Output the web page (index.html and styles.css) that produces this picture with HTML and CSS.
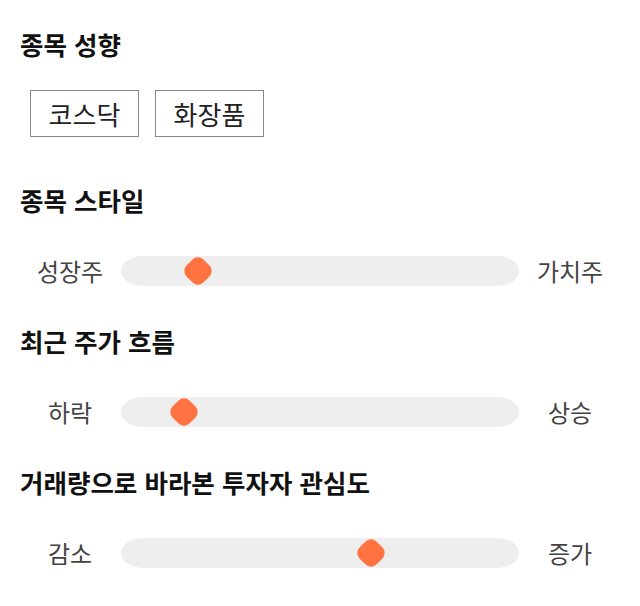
FILE: index.html
```html
<!DOCTYPE html>
<html lang="ko">
<head>
  <meta charset="UTF-8" />
  <meta name="viewport" content="width=device-width, initial-scale=1.0"/>
  <title>종목 성향</title>
  <link rel="stylesheet" href="styles.css">
</head>
<body>
  <div class="section">
    <h2>종목 성향</h2>
    <div class="chips">
      <span class="chip">코스닥</span>
      <span class="chip">화장품</span>
    </div>
  </div>

  <div class="section">
    <h2>종목 스타일</h2>
    <div class="slider">
      <span class="label">성장주</span>
      <div class="track"><span class="thumb" style="left: 19.3%"></span></div>
      <span class="label">가치주</span>
    </div>
  </div>

  <div class="section">
    <h2>최근 주가 흐름</h2>
    <div class="slider">
      <span class="label">하락</span>
      <div class="track"><span class="thumb" style="left: 15.8%"></span></div>
      <span class="label">상승</span>
    </div>
  </div>

  <div class="section">
    <h2>거래량으로 바라본 투자자 관심도</h2>
    <div class="slider">
      <span class="label">감소</span>
      <div class="track"><span class="thumb" style="left: 62.8%"></span></div>
      <span class="label">증가</span>
    </div>
  </div>
</body>
</html>
```

FILE: styles.css
```css
body {
  margin: 0;
  padding: 28px 20px 0;
  font-family: "Noto Sans CJK KR", "Noto Sans", sans-serif;
  color: #111;
  background: #fff;
}

h2 {
  margin: 0 0 40px;
  font-size: 25.5px;
  line-height: 32px;
  font-weight: bold;
}

.section {
  padding-bottom: 39px;
}

.chips {
  display: flex;
  gap: 16px;
  padding: 0 10px;
  margin: -10px 0 8px;
}

.chip {
  display: inline-block;
  width: 107px;
  height: 45px;
  line-height: 45px;
  text-align: center;
  border: 1px solid #888;
  font-size: 26px;
  color: #222;
}

.slider {
  display: flex;
  align-items: center;
  gap: 11px;
  padding: 0 10px;
}

.label {
  width: 80px;
  text-align: center;
  font-size: 24px;
  line-height: 30px;
  color: #444;
}

.track {
  flex: 1;
  position: relative;
  height: 30px;
  background: #eee;
  border-radius: 22px / 15px;
}

.thumb {
  position: absolute;
  top: 50%;
  width: 24px;
  height: 24px;
  margin: -12px 0 0 -12px;
  background: #ff7340;
  border-radius: 8px;
  transform: rotate(45deg);
}
```
